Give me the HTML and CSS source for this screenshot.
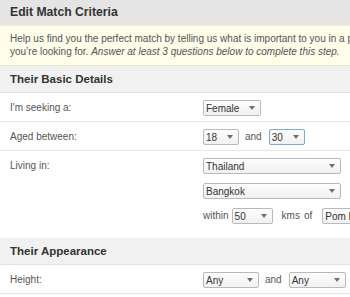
FILE: index.html
```html
<!DOCTYPE html>
<html lang="en">
<head>
<meta charset="UTF-8">
<title>Edit Match Criteria</title>
<meta name="viewport" content="width=device-width, initial-scale=1.0">
<link rel="stylesheet" href="styles.css">
</head>
<body>

<div class="page">
    <div class="title">Edit Match Criteria</div>
    <div class="intro">
        Help us find you the perfect match by telling us what is important to you in a partner and what<br>
        you&rsquo;re looking for. <em>Answer at least 3 questions below to complete this step.</em>
    </div>

    <div class="section">
        <h2>Their Basic Details</h2>
        <div class="row">
            <div class="label">I'm seeking a:</div>
            <div class="field">
                <span class="select w58"><span>Female</span><i class="arrow"></i></span>
            </div>
        </div>
        <div class="row">
            <div class="label">Aged between:</div>
            <div class="field">
                <span class="select w36"><span>18</span><i class="arrow"></i></span>
                <span class="word and">and</span>
                <span class="select w36 focus"><span>30</span><i class="arrow"></i></span>
            </div>
        </div>
        <div class="row">
            <div class="label">Living in:</div>
            <div class="field stack">
                <span class="select w138"><span>Thailand</span><i class="arrow"></i></span>
                <span class="select w138"><span>Bangkok</span><i class="arrow"></i></span>
                <div class="inline">
                    <span class="word within">within</span>
                    <span class="select w41"><span>50</span><i class="arrow"></i></span>
                    <span class="word kms">kms</span>
                    <span class="word of">of</span>
                    <span class="select w120"><span>Pom Prap Sattru Phai</span><i class="arrow"></i></span>
                </div>
            </div>
        </div>
    </div>

    <div class="section">
        <h2>Their Appearance</h2>
        <div class="row">
            <div class="label">Height:</div>
            <div class="field">
                <span class="select w56"><span>Any</span><i class="arrow"></i></span>
                <span class="word and">and</span>
                <span class="select w57"><span>Any</span><i class="arrow"></i></span>
            </div>
        </div>
        <div class="row">
            <div class="label">Weight:</div>
            <div class="field">
                <span class="select w56"><span>Any</span><i class="arrow"></i></span>
                <span class="word and">and</span>
                <span class="select w57"><span>Any</span><i class="arrow"></i></span>
            </div>
        </div>
    </div>
</div>

</body>
</html>
```

FILE: styles.css
```css
html, body { overflow: hidden; }
body { margin: 0; font-family: 'Liberation Sans', Arial, sans-serif; font-size: 10px; color: #555; background: #fff; }

.page { width: 460px; }

.title { height: 25px; line-height: 25px; padding: 0 10px; background: #e4e4e4; color: #333; font-size: 12.2px; font-weight: bold; }

.intro { background: #fdfdea; border-top: 1px solid #eeebcf; border-bottom: 1px solid #e9e6cc; padding: 6px 10px 7px; line-height: 13px; white-space: nowrap; color: #555; }
.intro em { font-style: italic; }

.section { margin-bottom: 9px; }
.section h2 { margin: 0; height: 26px; line-height: 27px; padding: 0 10px; background: #f1f1f1; border-bottom: 1px solid #e2e2e2; color: #333; font-size: 11.5px; font-weight: bold; }

.row { display: flex; align-items: flex-start; padding: 7px 10px 5px; border-bottom: 1px solid #e6e6e6; }
.section .row:last-child { border-bottom: none; }
.label { width: 193px; flex: none; line-height: 16px; color: #555; }
.field { display: flex; align-items: center; }
.field.stack { flex-direction: column; align-items: flex-start; gap: 9px; }
.inline { display: flex; align-items: center; white-space: nowrap; }

.word { line-height: 16px; color: #555; }
.and { margin: 0 7px 0 6px; }
.within { margin-right: 3px; }
.kms { margin-left: 9px; }
.of { margin-left: 4px; margin-right: 10px; }

.select {
    display: flex;
    align-items: center;
    justify-content: space-between;
    box-sizing: border-box;
    height: 16px;
    padding: 0 5px 0 2px;
    border: 1px solid #b9b9b9;
    border-radius: 2px;
    background: linear-gradient(#fdfdfd, #f1f1f1);
    color: #333;
    white-space: nowrap;
    overflow: hidden;
    flex: none;
}
.select.focus { border-color: #7ea6d6; }
.arrow { width: 0; height: 0; border-left: 3px solid transparent; border-right: 3px solid transparent; border-top: 4px solid #707070; flex: none; margin-left: 4px; }

.w36 { width: 36px; }
.w41 { width: 41px; }
.w56 { width: 56px; }
.w57 { width: 57px; }
.w58 { width: 58px; }
.w120 { width: 120px; }
.w138 { width: 138px; }
```
